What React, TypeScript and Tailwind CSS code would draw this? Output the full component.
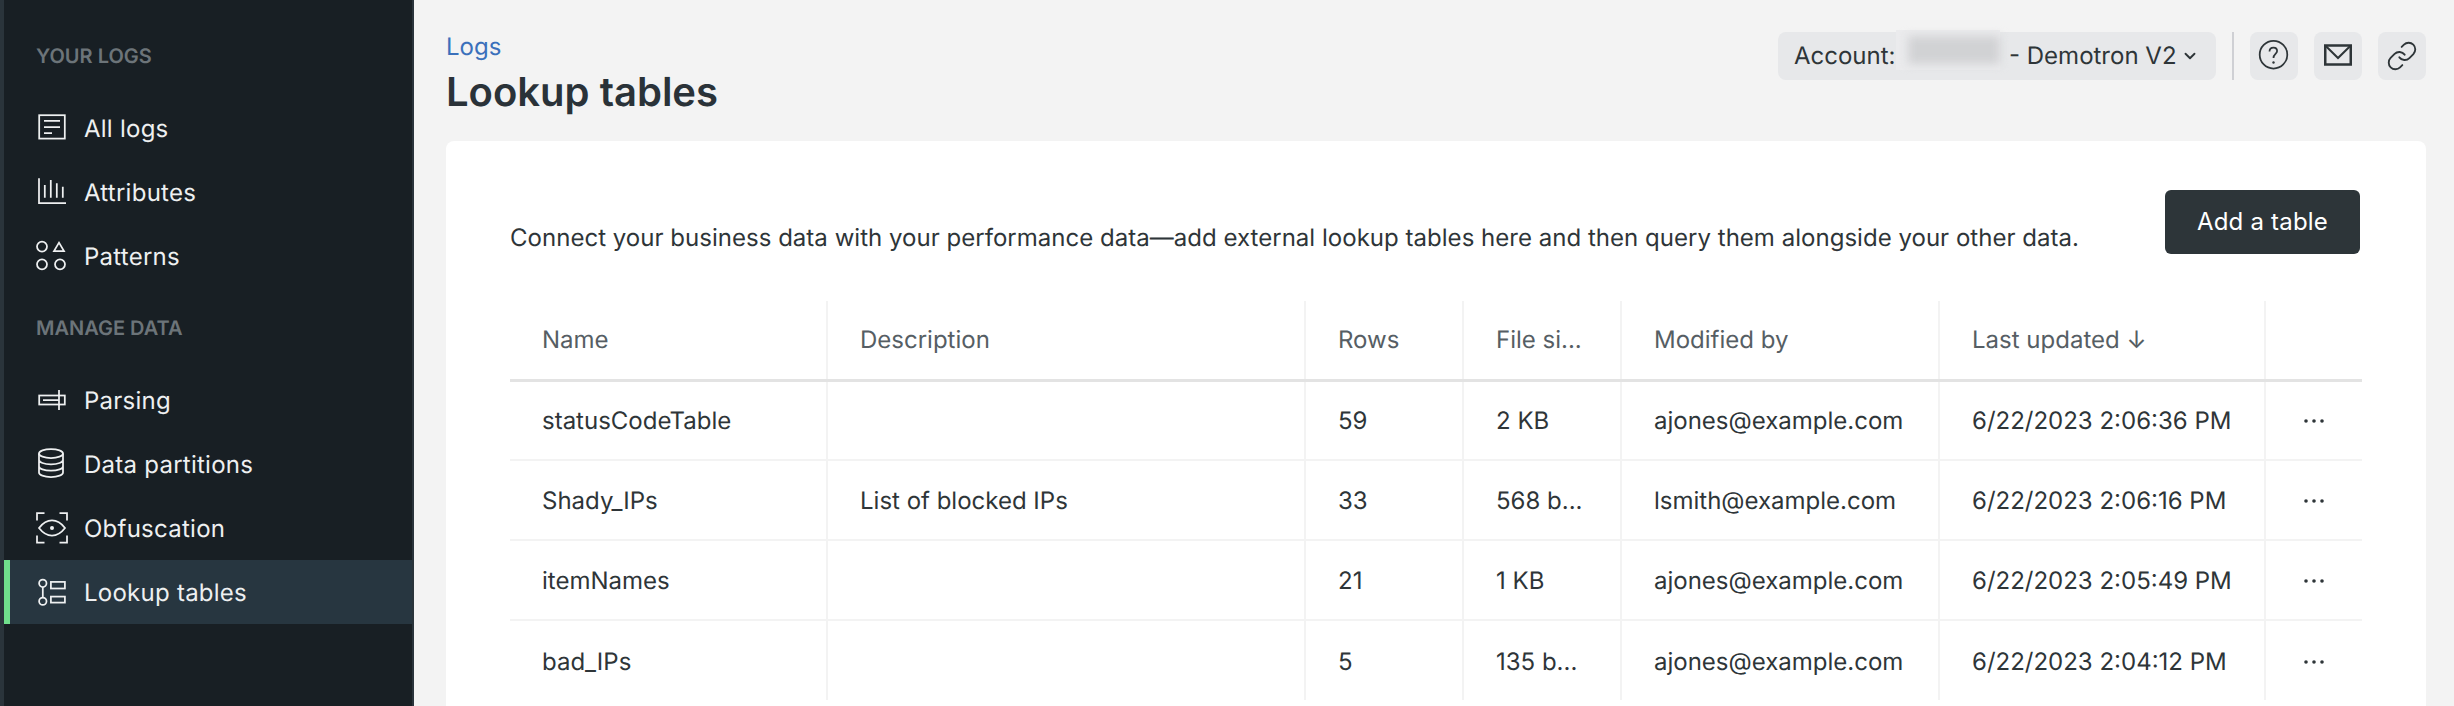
import { ChevronDown, Link } from "lucide-react";
import type { ReactNode } from "react";

function Icon({ children }: { children: ReactNode }) {
  return (
    <svg width="32" height="32" viewBox="0 0 32 32" fill="none" stroke="currentColor" strokeWidth="1.75" className="shrink-0">
      {children}
    </svg>
  );
}

const logNav = [
  {
    label: "All logs",
    icon: (
      <>
        <rect x="3.2" y="3.2" width="25.6" height="23.4" />
        <path d="M8 8.8h16M8 15h16M8 21h8" />
      </>
    ),
  },
  {
    label: "Attributes",
    icon: <path d="M3 2.3V27h27M8.8 9v12.7M14.8 4v17.7M20.8 7.3v14.4M26.8 10.7v11" />,
  },
  {
    label: "Patterns",
    icon: (
      <>
        <circle cx="6" cy="6.6" r="5" />
        <path d="M23 2.6l5 8.4H18z" />
        <circle cx="6" cy="24.3" r="5" />
        <circle cx="24" cy="24.3" r="5" />
      </>
    ),
  },
];

const dataNav = [
  {
    label: "Parsing",
    icon: (
      <>
        <rect x="3.2" y="11.5" width="25.6" height="9" />
        <path d="M7 16h16M23 6v20" />
      </>
    ),
  },
  {
    label: "Data partitions",
    icon: (
      <>
        <ellipse cx="15" cy="5.5" rx="12" ry="4.5" />
        <path d="M3 5.5v19c0 2.5 5 4.5 12 4.5s12-2 12-4.5v-19M3 11.8c0 2.5 5 4.5 12 4.5s12-2 12-4.5M3 18.2c0 2.5 5 4.5 12 4.5s12-2 12-4.5" />
      </>
    ),
  },
  {
    label: "Obfuscation",
    icon: (
      <>
        <path d="M1 8.5V1.2h7.5M23.5 1.2H31v7.3M1 23.5v7h7.5M23.5 30.5H31v-7" />
        <path d="M3 16c4-5.2 8-7.6 13-7.6s9 2.4 13 7.6c-4 5.2-8 7.6-13 7.6S7 21.2 3 16z" />
        <circle cx="16" cy="16" r="2" fill="currentColor" stroke="none" />
      </>
    ),
  },
  {
    label: "Lookup tables",
    active: true,
    icon: (
      <>
        <circle cx="6.8" cy="7.3" r="3.7" />
        <circle cx="6.8" cy="25.2" r="3.7" />
        <path d="M6.8 11v10.5" />
        <rect x="14.9" y="5.9" width="14" height="6.6" />
        <rect x="14.9" y="20.6" width="14" height="6" />
      </>
    ),
  },
];

function NavItem({ label, icon, active }: { label: string; icon: ReactNode; active?: boolean }) {
  return (
    <div
      className={
        active
          ? "flex h-16 items-center gap-4 border-l-[6px] border-[#70df8c] bg-[#273640] pl-[26px] text-[#eef0f1]"
          : "flex h-16 items-center gap-4 pl-8 text-[#eef0f1]"
      }
    >
      <Icon>{icon}</Icon>
      <span className="pt-0.5 text-[24px] tracking-[0.25px]">{label}</span>
    </div>
  );
}

function SectionLabel({ children }: { children: ReactNode }) {
  return <div className="pl-8 text-[20px] leading-6 font-semibold text-[#6c7479] uppercase">{children}</div>;
}

const rows = [
  ["statusCodeTable", "", "59", "2 KB", "ajones@example.com", "6/22/2023 2:06:36 PM"],
  ["Shady_IPs", "List of blocked IPs", "33", "568 b...", "lsmith@example.com", "6/22/2023 2:06:16 PM"],
  ["itemNames", "", "21", "1 KB", "ajones@example.com", "6/22/2023 2:05:49 PM"],
  ["bad_IPs", "", "5", "135 b...", "ajones@example.com", "6/22/2023 2:04:12 PM"],
];

const headers = ["Name", "Description", "Rows", "File si...", "Modified by", "Last updated ↓", ""];
const widths = ["w-[317px]", "w-[478px]", "w-[158px]", "w-[158px]", "w-[318px]", "w-[326px]", "w-[97px]"];

function Dots() {
  return (
    <svg width="22" height="6" viewBox="0 0 22 6" fill="#2e3538" className="mx-auto">
      <circle cx="3" cy="3" r="1.8" />
      <circle cx="11" cy="3" r="1.8" />
      <circle cx="19" cy="3" r="1.8" />
    </svg>
  );
}

function TopButton({ children }: { children: ReactNode }) {
  return <button className="flex h-12 w-12 items-center justify-center rounded-lg bg-[#e7e8ea] text-[#2e3538]">{children}</button>;
}

export default function App() {
  return (
    <div className="flex h-[706px] overflow-hidden bg-[#f3f3f3] font-['Inter',sans-serif] [text-rendering:geometricPrecision]">
      <aside className="w-[414px] shrink-0 border-r-2 border-l-4 border-r-[#2a343b] border-l-[#2a343b] bg-[#181f24]">
        <div className="pt-11">
          <SectionLabel>Your logs</SectionLabel>
        </div>
        <nav className="mt-7">
          {logNav.map((item) => (
            <NavItem key={item.label} {...item} />
          ))}
        </nav>
        <div className="mt-7">
          <SectionLabel>Manage data</SectionLabel>
        </div>
        <nav className="mt-7">
          {dataNav.map((item) => (
            <NavItem key={item.label} {...item} />
          ))}
        </nav>
      </aside>

      <main className="flex-1 pt-8 pr-7 pl-8">
        <div className="flex h-[109px] items-start justify-between">
          <div>
            <div className="text-[24px] leading-[30px] text-[#3a70bb]">Logs</div>
            <h1 className="mt-[5px] text-[40px] leading-[50px] font-semibold text-[#2a3238]">Lookup tables</h1>
          </div>
          <div className="flex items-center gap-4">
            <div className="relative flex h-12 w-[438px] items-center rounded-lg bg-[#e7e8ea] pl-4 text-[24px] text-[#2e3538]">
              <span>Account:</span>
              <span className="absolute top-[-2px] left-[118px] h-10 w-[104px] bg-[#ebebed]">
                <span className="absolute top-1.5 right-0 bottom-1.5 left-3 block bg-[#d1d2d4] blur-[5px]" />
              </span>
              <span className="absolute left-[231px]">- Demotron V2</span>
              <ChevronDown size={18} strokeWidth={2.5} className="absolute left-[403px]" />
            </div>
            <div className="h-12 w-0.5 bg-[#cfd0d4]" />
            <TopButton>
              <svg width="32" height="32" viewBox="0 0 32 32" fill="none" stroke="currentColor" strokeWidth="1.75">
                <circle cx="15.5" cy="14.7" r="13.8" />
                <path d="M11.5 11.5c0-2.5 1.7-4 4-4s3.6 1.5 3.6 3.5c0 3-3.6 3-3.6 7" />
                <circle cx="15.5" cy="22.5" r="1.2" fill="currentColor" stroke="none" />
              </svg>
            </TopButton>
            <TopButton>
              <svg width="32" height="32" viewBox="0 0 32 32" fill="none" stroke="currentColor" strokeWidth="2.5">
                <rect x="3.25" y="5.5" width="25.5" height="19" />
                <path d="M3.25 5.5L16 18 28.75 5.5" strokeWidth="2" />
              </svg>
            </TopButton>
            <TopButton>
              <Link size={32} strokeWidth={1.4} />
            </TopButton>
          </div>
        </div>

        <section className="h-[565px] rounded-t-lg bg-white px-16 pt-[49px] text-[#2e3538]">
          <div className="flex h-[64px] items-start justify-between">
            <p className="mt-[33px] text-[24px] leading-[30px] tracking-[0.025px]">
              Connect your business data with your performance data—add external lookup tables here and then query them alongside your other data.
            </p>
            <button className="mr-0.5 h-16 w-[195px] shrink-0 rounded-md bg-[#2d3539] text-[24px] tracking-[0.2px] text-white">Add a table</button>
          </div>
          <table className="mt-[47px] w-[1852px] table-fixed border-collapse text-[24px]">
            <thead>
              <tr className="h-[79px] border-b-[3px] border-[#e3e3e3] text-left text-[#565e64]">
                {headers.map((h, i) => (
                  <th key={i} className={`${widths[i]} border-r-2 border-[#f3f3f3] pl-8 font-normal last:border-r-0`}>
                    {h}
                  </th>
                ))}
              </tr>
            </thead>
            <tbody>
              {rows.map((row) => (
                <tr key={row[0]} className="h-20 border-b-2 border-[#f3f3f3] last:border-b-0">
                  {row.map((cell, i) => (
                    <td key={i} className="border-r-2 border-[#f3f3f3] pt-0.5 pl-8">
                      {cell}
                    </td>
                  ))}
                  <td className="pt-0.5">
                    <Dots />
                  </td>
                </tr>
              ))}
            </tbody>
          </table>
        </section>
      </main>
    </div>
  );
}
